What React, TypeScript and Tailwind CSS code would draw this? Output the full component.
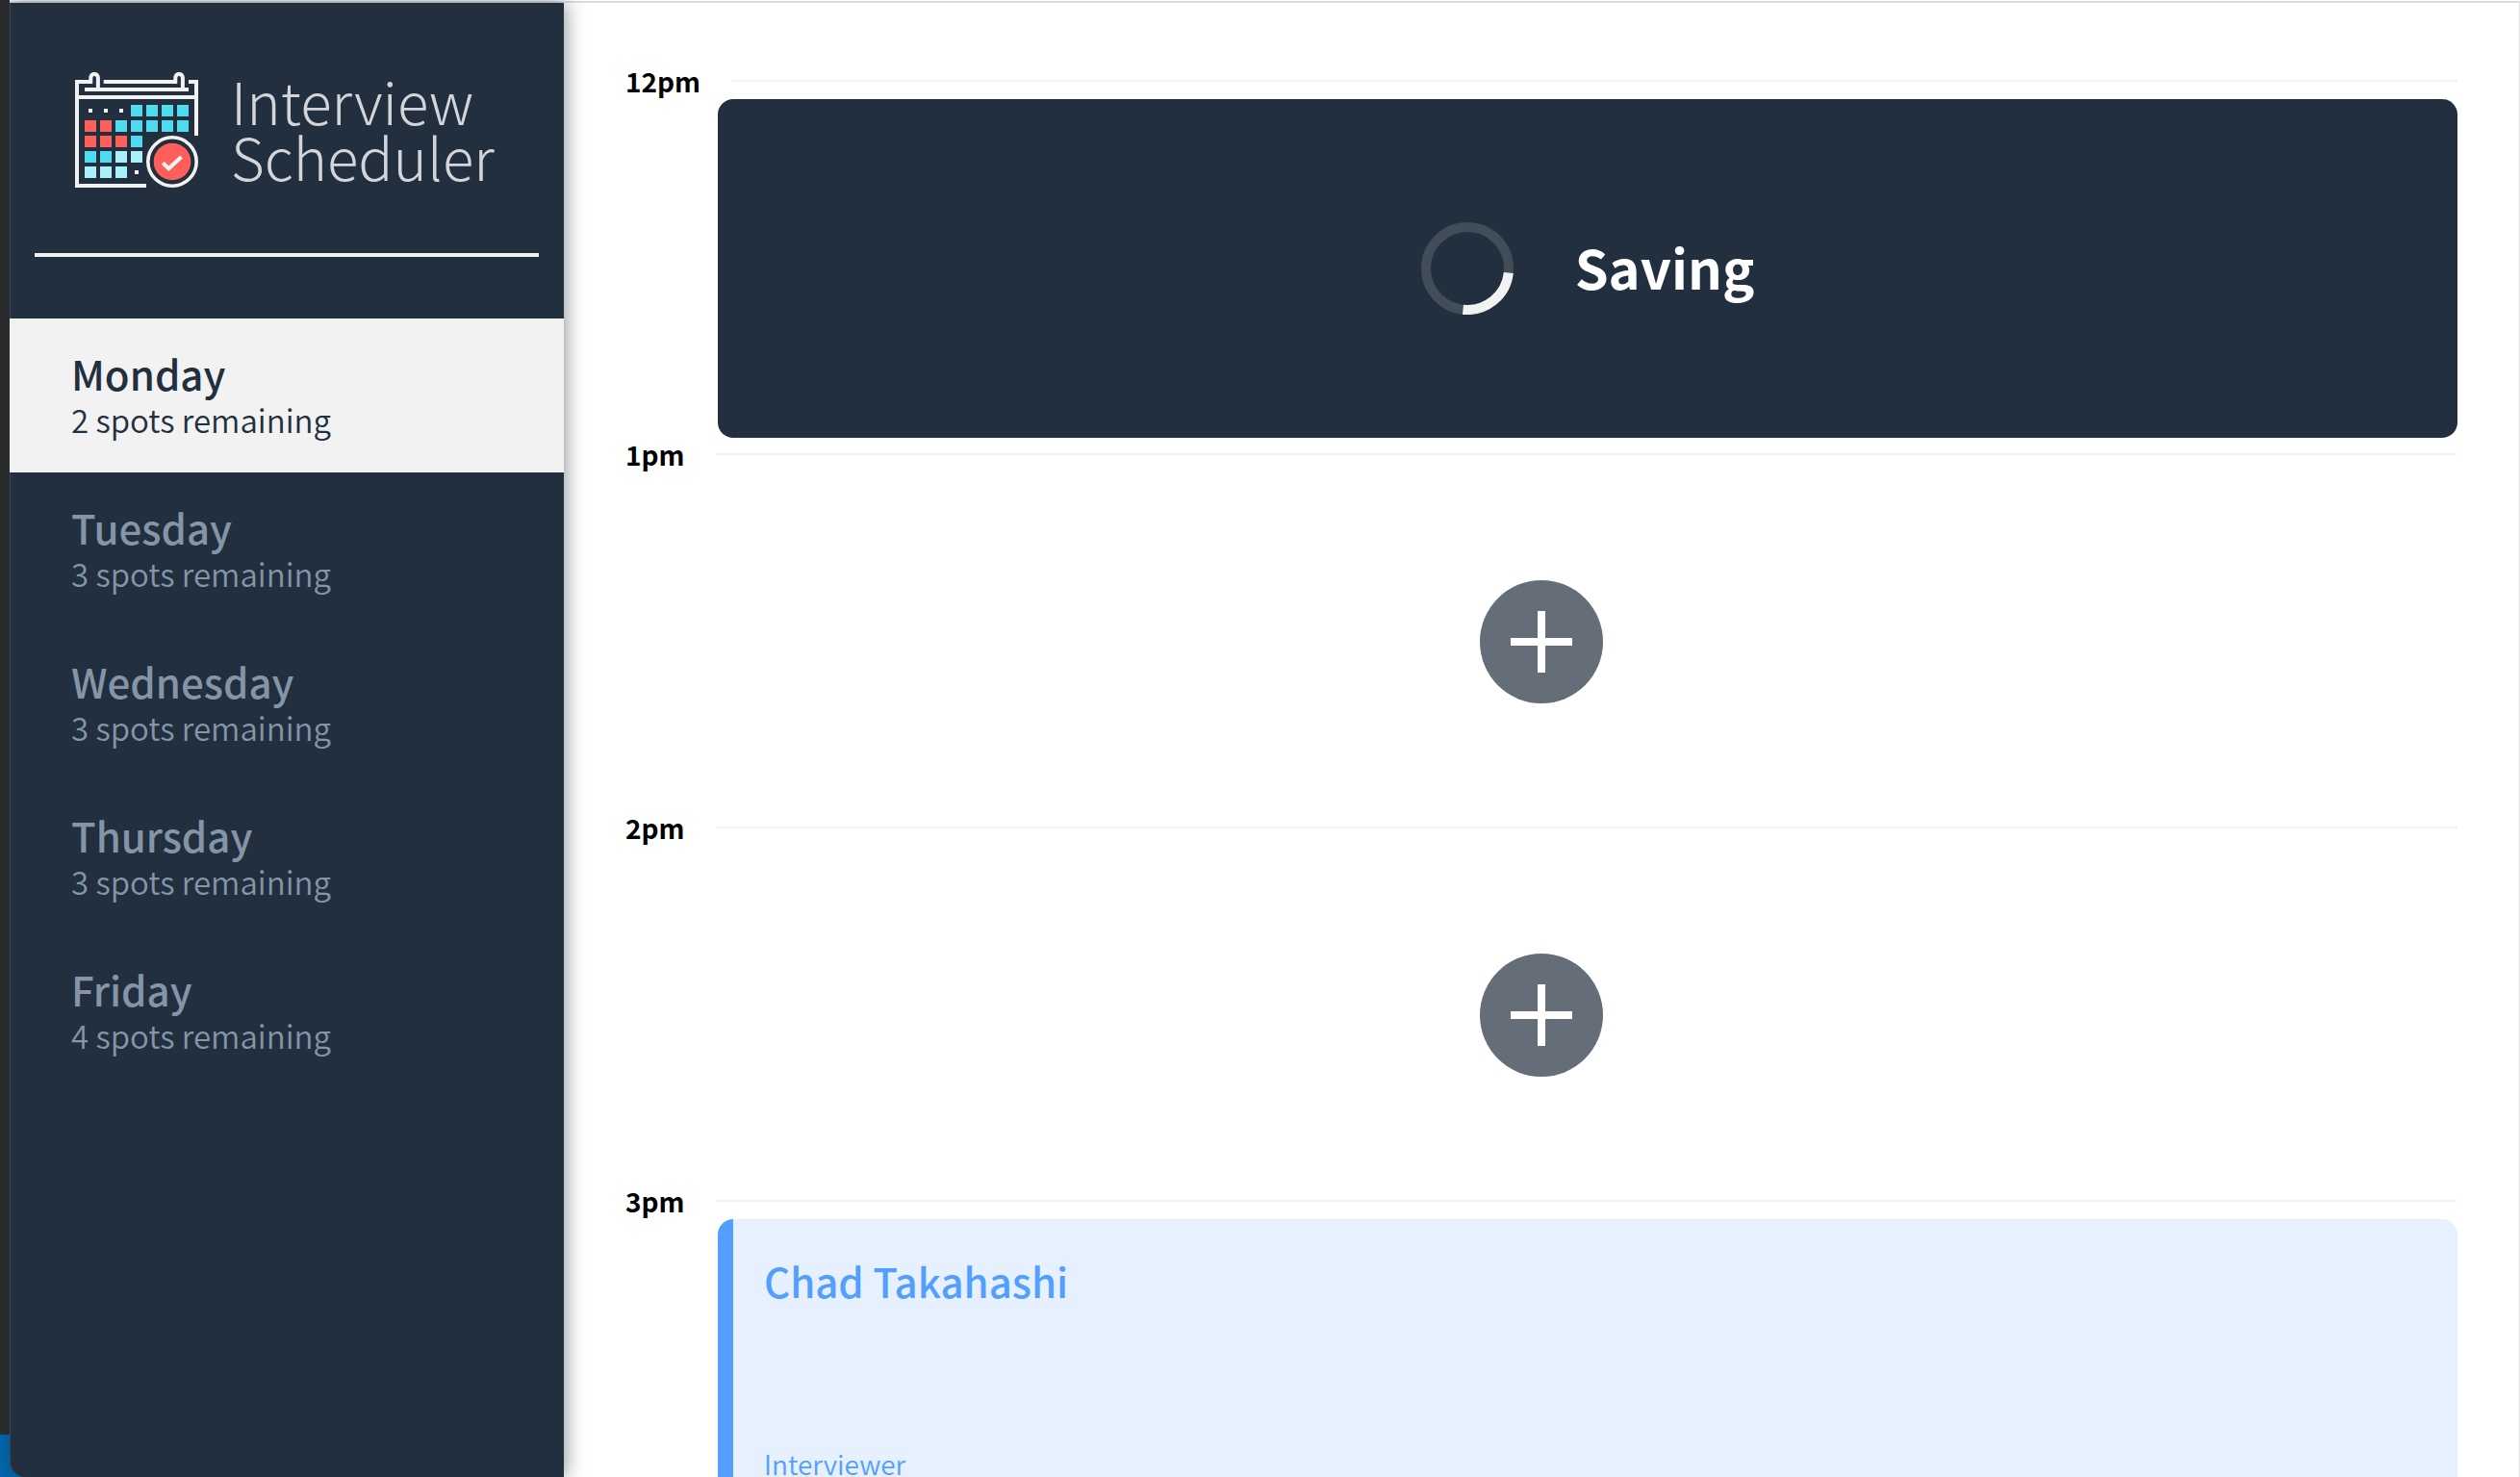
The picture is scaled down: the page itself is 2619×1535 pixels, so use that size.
const DAYS = [
  { name: "Monday", spots: 2 },
  { name: "Tuesday", spots: 3 },
  { name: "Wednesday", spots: 3 },
  { name: "Thursday", spots: 3 },
  { name: "Friday", spots: 4 },
];

const CYAN = "#4fdcf1";
const RED = "#ff5f5b";
const PALE = "#a8f1fb";

// One letter per calendar cell: d = dot, c = cyan, r = red, p = pale
const CELLS = ["dddcccc", "rrccccc", "rrrc", "ccpp", "pppd"];

function CalendarLogo() {
  return (
    <svg viewBox="0 0 128 120" className="h-30 w-32 shrink-0" fill="none" aria-hidden="true">
      <g stroke="#f2f2f2" strokeWidth="4">
        <path d="M74 118H2V10H16.3V5.7a3.8 3.8 0 0 1 7.6 0V18" />
        <path d="M29.7 10H104.3V5.7a3.8 3.8 0 0 1 7.6 0V18" />
        <path d="M118 10H126V66M10 18H118M2 26H126" />
      </g>
      {CELLS.map((row, y) =>
        row.split("").map((cell, x) =>
          cell === "d" ? (
            <rect key={`${x}-${y}`} x={14 + x * 16} y={38 + y * 16} width="4" height="4" fill="#f2f2f2" />
          ) : (
            <rect
              key={`${x}-${y}`}
              x={10 + x * 16}
              y={34 + y * 16}
              width="12"
              height="12"
              fill={cell === "c" ? CYAN : cell === "r" ? RED : PALE}
            />
          ),
        ),
      )}
      <circle cx="101" cy="93" r="25.2" stroke="#f2f2f2" strokeWidth="3.6" />
      <circle cx="101" cy="93" r="19.3" fill={RED} />
      <path d="M91.3 94.3L97.3 100.2L110.5 88" stroke="#f2f2f2" strokeWidth="4" />
    </svg>
  );
}

function Sidebar() {
  return (
    <aside className="z-10 flex w-144 shrink-0 flex-col rounded-bl-2xl border-l border-[#3a4653] bg-[#222f3e] pt-18 shadow-[2px_0_20px_rgba(34,47,62,0.5)]">
      <div className="flex items-start gap-[34px] pl-[67px]">
        <CalendarLogo />
        <h1 className="text-[60px] leading-[58px] font-light text-[#d3d5d8]">
          Interview
          <br />
          Scheduler
        </h1>
      </div>
      <hr className="mr-[26px] ml-[25px] mt-17 border-t-4 border-[#f2f2ee]" />
      <nav className="mt-16 -ml-px">
        <ul>
          {DAYS.map((day, i) => (
            <li key={day.name}>
              <button
                type="button"
                className={
                  i === 0
                    ? "flex h-40 w-full flex-col bg-[#f2f2f2] px-16 pt-[33px] text-left text-[#222f3e]"
                    : "flex h-40 w-full flex-col px-16 pt-[33px] text-left text-[#8395a7]"
                }
              >
                <span className="text-[42px] leading-12 font-medium">{day.name}</span>
                <span className="text-[33px] leading-12 font-[350]">{day.spots} spots remaining</span>
              </button>
            </li>
          ))}
        </ul>
      </nav>
    </aside>
  );
}

function Slot({ time, children }: { time: string; children?: React.ReactNode }) {
  return (
    <article className="flex h-97 flex-col">
      <header className="mb-0.5 flex items-center gap-8">
        <h2 className="text-[28px] leading-[34px] font-bold text-black">{time}</h2>
        <hr className="flex-1 border-t-2 border-[#f2f2f2]" />
      </header>
      {children}
    </article>
  );
}

function AddButton() {
  return (
    <div className="flex flex-1 items-center justify-center">
      <button type="button" aria-label="Add appointment" className="rounded-full">
        <svg viewBox="0 0 128 128" className="size-32" aria-hidden="true">
          <circle cx="64" cy="64" r="64" fill="#656d78" />
          <path d="M32 64H96M64 32V96" stroke="#fff" strokeWidth="8" />
        </svg>
      </button>
    </div>
  );
}

function SavingCard() {
  return (
    <section role="status" className="ml-24 flex h-88 items-center justify-center gap-16 rounded-2xl bg-[#222f3e]">
      <svg viewBox="0 0 96 96" className="size-24" fill="none" aria-hidden="true">
        <circle cx="48" cy="48" r="43" stroke="#414d58" strokeWidth="10" />
        <path d="M90.8 52.5A43 43 0 0 1 43.5 90.8" stroke="#f2f2f2" strokeWidth="10" />
      </svg>
      <p className="pb-1 text-[56px] leading-18 font-bold text-white">Saving</p>
    </section>
  );
}

function AppointmentCard() {
  return (
    <section className="ml-24 flex h-88 shrink-0 flex-col rounded-2xl border-l-16 border-[#539fff] bg-[#e6f0ff] p-8 text-[#539fff]">
      <h3 className="text-[42px] leading-16 font-medium">Chad Takahashi</h3>
      <p className="mt-35 text-[28px] leading-9 font-[350]">Interviewer</p>
    </section>
  );
}

export default function App() {
  return (
    <div className="flex h-screen overflow-hidden bg-[#0068b1] font-['Noto_Sans_CJK_SC',sans-serif]">
      <div className="w-2.5 shrink-0 pb-11">
        <div className="h-full bg-[#2b2b2b]" />
      </div>
      <div className="flex min-w-0 flex-1 flex-col">
        <div className="h-[3px] shrink-0 border-b-2 border-[#d7dde2] bg-white" />
        <div className="flex min-h-0 flex-1">
          <Sidebar />
          <main className="flex-1 overflow-hidden border-r border-[#e4e4e4] bg-white px-16 pt-16">
            <Slot time="12pm">
              <SavingCard />
            </Slot>
            <Slot time="1pm">
              <AddButton />
            </Slot>
            <Slot time="2pm">
              <AddButton />
            </Slot>
            <Slot time="3pm">
              <AppointmentCard />
            </Slot>
          </main>
        </div>
      </div>
    </div>
  );
}
